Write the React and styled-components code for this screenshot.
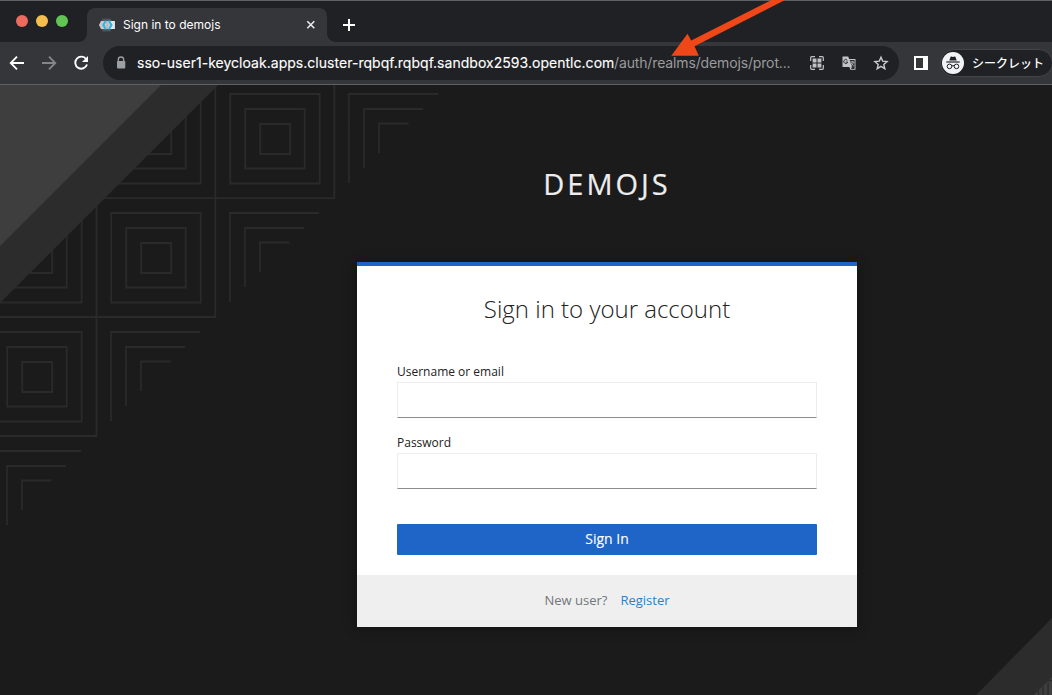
import React from "react";
import styled, { createGlobalStyle } from "styled-components";

const GlobalStyle = createGlobalStyle`
  *, *::before, *::after { box-sizing: border-box; }
  html, body { margin: 0; padding: 0; overflow: hidden; background: #1b1b1b; }
`;

const Window = styled.div`
  position: relative;
  display: flex;
  flex-direction: column;
  width: 1052px;
  height: 695px;
  overflow: hidden;
  font-family: Inter, "Noto Sans CJK JP", sans-serif;
`;

const TabStrip = styled.div`
  display: flex;
  align-items: flex-end;
  height: 42px;
  background: #202124;
  border-top: 1px solid #5f6164;
`;

const TrafficLights = styled.div`
  display: flex;
  align-self: flex-start;
  gap: 8px;
  width: 87px;
  padding: 14px 0 0 16px;
`;

const Light = styled.span`
  width: 12px;
  height: 12px;
  border-radius: 50%;
  background: ${(p) => p.$color};
`;

const Tab = styled.div`
  position: relative;
  display: flex;
  align-items: center;
  width: 240px;
  height: 34px;
  padding: 0 10px 0 12px;
  border-radius: 8px 8px 0 0;
  background: #35363a;
  color: #fff;

  &::before, &::after {
    content: "";
    position: absolute;
    bottom: 0;
    width: 8px;
    height: 8px;
  }
  &::before {
    left: -8px;
    background: radial-gradient(circle at 0 0, transparent 7.5px, #35363a 8px);
  }
  &::after {
    right: -8px;
    background: radial-gradient(circle at 100% 0, transparent 7.5px, #35363a 8px);
  }
`;

const TabTitle = styled.span`
  flex: 1;
  margin-left: 8px;
  font-size: 12px;
  line-height: 16px;
  letter-spacing: 0;
  white-space: nowrap;
`;

const NewTab = styled.div`
  display: flex;
  margin: 0 0 10px 15px;
`;

const Toolbar = styled.div`
  display: flex;
  align-items: center;
  height: 43px;
  padding-left: 9px;
  background: #35363a;
  border-bottom: 1px solid #606165;
`;

const NavButtons = styled.div`
  display: flex;
  flex: none;
  gap: 16px;
  width: 94px;
`;

const AddressBar = styled.div`
  display: flex;
  flex: none;
  align-items: center;
  width: 796px;
  height: 34px;
  padding: 0 10px 0 12px;
  border-radius: 17px;
  background: #202124;
`;

const Url = styled.div`
  display: flex;
  width: 656px;
  margin-left: 10px;
  font-size: 14px;
  line-height: 20px;
  white-space: nowrap;
`;

const Host = styled.span`
  width: 477px;
  color: #fff;
  letter-spacing: ${(p) => p.$tracking};
  -webkit-text-stroke: 0.12px currentColor;
`;

const Path = styled.span`
  color: #9a9b9d;
  letter-spacing: ${(p) => p.$tracking};
`;

const AddressActions = styled.div`
  display: flex;
  gap: 16px;
  margin-left: auto;
`;

const SidePanel = styled.span`
  flex: none;
  width: 14px;
  height: 14px;
  margin-left: 15px;
  border: 2px solid #fff;
  border-left-width: 2px;
  border-right-width: 5px;
`;

const Profile = styled.div`
  display: flex;
  align-items: center;
  flex: none;
  gap: 8px;
  width: 113px;
  height: 28px;
  margin-left: 12px;
  padding-left: 1px;
  border: 1px solid #434449;
  border-radius: 14px;
  background: #202124;
  color: #fff;
  font-family: "Noto Sans CJK JP", sans-serif;
  font-size: 12px;
  font-weight: 500;
  line-height: 24px;
  white-space: nowrap;
`;

const Page = styled.main`
  position: relative;
  display: flex;
  flex-direction: column;
  align-items: flex-start;
  flex: 1;
  padding-left: 357px;
  background: #1b1b1b;
  font-family: "Open Sans", sans-serif;
`;

const Backdrop = styled.svg`
  position: absolute;
  inset: 0;
`;

const LoginColumn = styled.div`
  position: relative;
  width: 500px;
`;

const Realm = styled.h1`
  margin: 0;
  padding-top: 79px;
  height: 177px;
  color: #ededed;
  font-size: 29px;
  font-weight: 400;
  line-height: 40px;
  letter-spacing: 3px;
  text-align: center;
  text-transform: uppercase;
  -webkit-text-stroke: 0.2px currentColor;
`;

const Card = styled.section`
  display: flex;
  flex-direction: column;
  height: 365px;
  border-top: 4px solid #1f65c7;
  background: #fff;
  box-shadow: 0 1px 12px rgba(0, 0, 0, 0.35);
`;

const CardTitle = styled.h2`
  margin: 0;
  padding-top: 27px;
  height: 96px;
  color: #222;
  font-size: 24px;
  font-weight: 300;
  line-height: 32px;
  text-align: center;
`;

const Form = styled.form`
  display: flex;
  flex-direction: column;
  padding: 0 40px;
`;

const Field = styled.label`
  display: flex;
  flex-direction: column;
  height: 71px;
  color: #222;
  font-size: 12px;
  line-height: 20px;
`;

const Input = styled.input`
  height: 36px;
  padding: 0 8px;
  border: 1px solid #ededed;
  border-bottom-color: #8a8d90;
  border-radius: 0;
  background: #fff;
  outline: none;
`;

const Submit = styled.button`
  height: 31px;
  margin: 20px 0 0;
  padding: 0 0 2px;
  border: 0;
  border-radius: 1px;
  background: #1f65c7;
  color: #fff;
  font: 400 14px/29px "Open Sans", sans-serif;
  -webkit-text-stroke: 0.12px currentColor;
`;

const CardFooter = styled.footer`
  display: flex;
  justify-content: center;
  gap: 13px;
  height: 52px;
  margin-top: auto;
  background: #efefef;
  color: #72767b;
  font-size: 13px;
  line-height: 51px;
`;

const Register = styled.a`
  color: #2783cc;
`;

const Arrow = styled.svg`
  position: absolute;
  top: 0;
  left: 660px;
`;

function ArrowIcon({ forward }) {
  return (
    <svg width="16" height="16" viewBox="0 0 16 16" fill="none" stroke={forward ? "#85868a" : "#fff"} strokeWidth="1.8">
      <path d={forward ? "M1 8H14M8 1.7L14.3 8L8 14.3" : "M15 8H2M8 1.7L1.7 8L8 14.3"} />
    </svg>
  );
}

function ReloadIcon() {
  return (
    <svg width="16" height="16" viewBox="0 0 16 16">
      <path d="M13.2 4.2A6 6 0 1 0 14 9.5" fill="none" stroke="#fff" strokeWidth="1.9" />
      <path d="M15 1V7H9Z" fill="#fff" />
    </svg>
  );
}

function Favicon() {
  return (
    <svg width="16" height="16" viewBox="0 0 16 16">
      <path d="M3.5 1.5h8L15 8l-3.5 6.5h-8L0 8z" fill="#505155" />
      <path d="M2 4H15.8V12H2L0 8z" fill="#c9c9c9" />
      <path d="M11 4h4.8v8H11z" fill="#e5e5e5" />
      <path d="M7.4 4h1.8v8H7.4z" fill="#b9bcbe" />
      <path d="M5.8 3.4H7.9L5.5 8l2.4 4.6H5.8L3.2 8zM8.9 3.4H11L13.6 8 11 12.6H8.9L11.3 8z" fill="#27b5e6" />
    </svg>
  );
}

function LockIcon() {
  return (
    <svg width="12" height="14" viewBox="0 0 12 14">
      <path d="M3.3 6V3.7a2.7 2.7 0 0 1 5.4 0V6" fill="none" stroke="#9aa0a6" strokeWidth="1.3" />
      <rect x="2" y="5" width="8.3" height="7.6" rx="1" fill="#9aa0a6" />
    </svg>
  );
}

function QrIcon() {
  return (
    <svg width="16" height="16" viewBox="0 0 16 16">
      <path d="M1.7 6V2.7a1 1 0 0 1 1-1H6M10 1.7h3.3a1 1 0 0 1 1 1V6M14.3 10v3.3a1 1 0 0 1-1 1H10M6 14.3H2.7a1 1 0 0 1-1-1V10" fill="none" stroke="#bfc1c4" strokeWidth="1.2" />
      <path d="M3.6 3.6h3.9v3.9H3.6zM8.5 3.6h3.9v3.9H8.5zM3.6 8.5h3.9v3.9H3.6zM8.5 8.5h3.9v3.9H8.5z" fill="#bfc1c4" />
    </svg>
  );
}

function TranslateIcon() {
  return (
    <svg width="16" height="16" viewBox="0 0 16 16">
      <path d="M1.5 1.5h5.7l1 2.5h6.3v10.8H9.3L8.4 12H1.5z" fill="#c1c3c5" />
      <path d="M8.7 4.9h4.9v9H9.9l1-2z" fill="#303134" />
      <path d="M6.3 5.2A2 2 0 1 0 6.7 7H4.8" fill="none" stroke="#303134" strokeWidth="1" />
      <path d="M9.3 7h4M11.3 6v1M12.4 7c-.3 1.8-1.3 3-2.5 4M10.2 8c.6 1.3 1.6 2.3 2.6 3" fill="none" stroke="#c1c3c5" strokeWidth=".8" />
    </svg>
  );
}

function StarIcon() {
  return (
    <svg width="16" height="16" viewBox="0 0 16 16">
      <path d="M8 2.2l1.7 3.9 4.4.4-3.3 2.9 1 4.3L8 11.4l-3.8 2.3 1-4.3-3.3-2.9 4.4-.4z" fill="none" stroke="#c9cbce" strokeWidth="1.4" />
    </svg>
  );
}

function IncognitoIcon() {
  return (
    <svg width="22" height="22" viewBox="0 0 22 22">
      <circle cx="11" cy="11" r="11" fill="#f1f3f4" />
      <path d="M7.3 8.5L8.6 4.8Q8.8 4.3 9.3 4.5L11 5l1.7-.5q.5-.2.7.3l1.3 3.7z" fill="#202124" />
      <path d="M4.3 10h13.4" stroke="#202124" strokeWidth="1.2" />
      <g fill="none" stroke="#202124" strokeWidth="1">
        <circle cx="7.5" cy="14.4" r="2.3" />
        <circle cx="14.5" cy="14.4" r="2.3" />
        <path d="M9.8 14q1.2-.8 2.4 0" />
      </g>
    </svg>
  );
}

const squares = [
  [111.2, 9], [230.2, 9],
  [-7.8, 128], [111.2, 128],
  [-7.8, 247],
];
const chevrons = [[349, 9], [230, 128], [111, 247], [-8, 366]];

function PageBackdrop() {
  return (
    <Backdrop width="1052" height="610" viewBox="0 0 1052 610">
      <g fill="none" stroke="#2a2a2a" strokeWidth="1.8">
        {squares.map(([x, y]) => (
          <path key={`${x}-${y}`} d={`M${x} ${y}h89.5v89.5h-89.5zM${x + 15} ${y + 15}h59.5v59.5h-59.5zM${x + 30} ${y + 30}h30v30h-30z`} />
        ))}
        {chevrons.map(([x, y]) => (
          <path key={`${x}-${y}`} d={`M${x} ${y + 89}V${y}H${x + 89}M${x + 15} ${y + 74}V${y + 15}H${x + 74}M${x + 30} ${y + 59}V${y + 29.5}H${x + 59.5}`} />
        ))}
        <path d="M334.3 0V113.2H100M215.3 0V232H0M96.5 100V351H0" />
      </g>
      <path d="M0 0H218L0 218z" fill="#2c2c2c" />
      <path d="M0 0H161L0 161z" fill="#3e3e3e" />
      <path d="M976 610L1052 533V610z" fill="#2c2c2c" />
      <path d="M1034 610L1052 592V610z" fill="#3e3e3e" />
      <path d="M1038.5 606V610M1043 601V610M1048 597V610M1048 595.5H1052" stroke="#2c2c2c" strokeWidth="1.4" />
    </Backdrop>
  );
}

export default function App() {
  return (
    <Window>
      <GlobalStyle />
      <TabStrip>
        <TrafficLights>
          <Light $color="#ed6a5e" />
          <Light $color="#f5bf4f" />
          <Light $color="#61c554" />
        </TrafficLights>
        <Tab>
          <Favicon />
          <TabTitle>Sign in to demojs</TabTitle>
          <svg width="12" height="12" viewBox="0 0 12 12">
            <path d="M2.3 2.3l7 7M9.3 2.3l-7 7" stroke="#e8eaed" strokeWidth="1.6" />
          </svg>
        </Tab>
        <NewTab>
          <svg width="14" height="14" viewBox="0 0 14 14">
            <path d="M7 1v12M1 7h12" stroke="#fff" strokeWidth="2" />
          </svg>
        </NewTab>
      </TabStrip>
      <Toolbar>
        <NavButtons>
          <ArrowIcon />
          <ArrowIcon forward />
          <ReloadIcon />
        </NavButtons>
        <AddressBar>
          <LockIcon />
          <Url>
            <Host $tracking="0.03px">sso-user1-keycloak.apps.cluster-rqbqf.rqbqf.sandbox2593.opentlc.com</Host>
            <Path $tracking="-0.14px">/auth/realms/demojs/prot...</Path>
          </Url>
          <AddressActions>
            <QrIcon />
            <TranslateIcon />
            <StarIcon />
          </AddressActions>
        </AddressBar>
        <SidePanel />
        <Profile>
          <IncognitoIcon />
          <span>シークレット</span>
        </Profile>
      </Toolbar>
      <Page>
        <PageBackdrop />
        <LoginColumn>
          <Realm>demojs</Realm>
          <Card>
            <CardTitle>Sign in to your account</CardTitle>
            <Form>
              <Field>
                Username or email
                <Input type="text" />
              </Field>
              <Field>
                Password
                <Input type="password" />
              </Field>
              <Submit type="button">Sign In</Submit>
            </Form>
            <CardFooter>
              <span>New user?</span>
              <Register>Register</Register>
            </CardFooter>
          </Card>
        </LoginColumn>
      </Page>
      <Arrow width="130" height="60" viewBox="660 0 130 60">
        <path d="M671.3 55.7L687.5 33.7L691.2 40.4L771.5 0H785L694.5 46.2L698.8 55.7z" fill="#f04719" />
      </Arrow>
    </Window>
  );
}
